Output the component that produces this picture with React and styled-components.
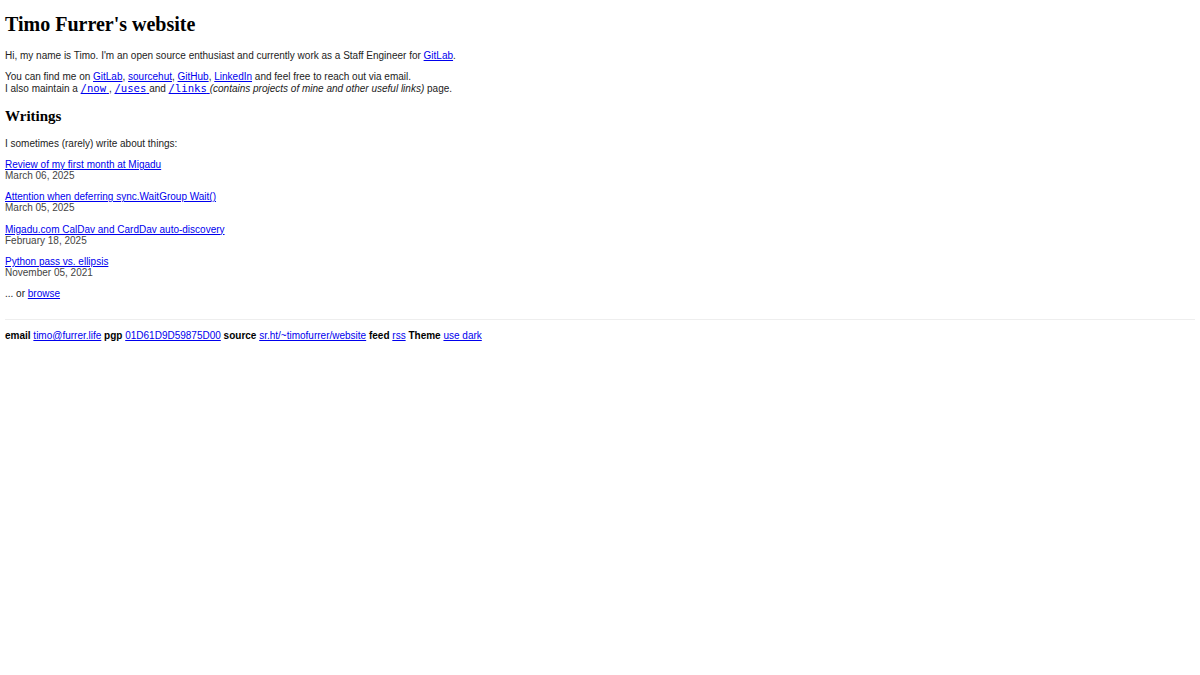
import React from 'react'
import styled, { createGlobalStyle } from 'styled-components'

const GlobalStyle = createGlobalStyle`
  body {
    margin: 0;
    padding: 0 5px 5px;
    font-family: "Liberation Sans", Arial, sans-serif;
    font-size: 10px;
    color: #222;
    background: #fff;
  }
  a {
    color: #0000ee;
  }
`

const Title = styled.h1`
  font-family: "Liberation Serif", "Times New Roman", serif;
  font-size: 20px;
  margin: 0.67em 0;
  color: #000;
`
const SectionTitle = styled.h2`
  font-family: "Liberation Serif", "Times New Roman", serif;
  font-size: 15px;
  margin: 14.5px 0 12.5px;
  color: #000;
`
const Para = styled.p`
  margin: 10px 0;
`
const Code = styled.code`
  font-family: "DejaVu Sans Mono", monospace;
  font-size: 10.6px;
`
const PostList = styled.ul`
  list-style: none;
  padding: 0;
  margin: 10px 0;
`
const Post = styled.li`
  margin-bottom: 10.5px;
  &:last-child {
    margin-bottom: 0;
  }
`
const PostDate = styled.div`
  color: #444;
`
const Footer = styled.footer`
  margin-top: 20px;
  border-top: 1px solid #eee;
  padding-top: 10px;
  b {
    color: #000;
  }
`

const posts = [
  { title: 'Review of my first month at Migadu', date: 'March 06, 2025' },
  { title: 'Attention when deferring sync.WaitGroup Wait()', date: 'March 05, 2025' },
  { title: 'Migadu.com CalDav and CardDav auto-discovery', date: 'February 18, 2025' },
  { title: 'Python pass vs. ellipsis', date: 'November 05, 2021' },
]

const App = () => (
  <>
    <GlobalStyle />
    <Title>Timo Furrer's website</Title>
    <Para>
      Hi, my name is Timo. I'm an open source enthusiast and currently work as a Staff Engineer for{' '}
      <a href="#">GitLab</a>.
    </Para>
    <Para>
      You can find me on <a href="#">GitLab</a>, <a href="#">sourcehut</a>, <a href="#">GitHub</a>,{' '}
      <a href="#">LinkedIn</a> and feel free to reach out via email.
      <br />
      I also maintain a <a href="#"><Code>/now</Code> </a>, <a href="#"><Code>/uses</Code> </a>and{' '}
      <a href="#"><Code>/links</Code> </a><i>(contains projects of mine and other useful links)</i> page.
    </Para>
    <SectionTitle>Writings</SectionTitle>
    <Para>I sometimes (rarely) write about things:</Para>
    <PostList>
      {posts.map((p) => (
        <Post key={p.title}>
          <a href="#">{p.title}</a>
          <PostDate>{p.date}</PostDate>
        </Post>
      ))}
    </PostList>
    <Para>
      ... or <a href="#">browse</a>
    </Para>
    <Footer>
      <b>email</b> <a href="#">timo@furrer.life</a> <b>pgp</b> <a href="#">01D61D9D59875D00</a>{' '}
      <b>source</b> <a href="#">sr.ht/~timofurrer/website</a> <b>feed</b> <a href="#">rss</a>{' '}
      <b>Theme</b> <a href="#">use dark</a>
    </Footer>
  </>
)

export default App
